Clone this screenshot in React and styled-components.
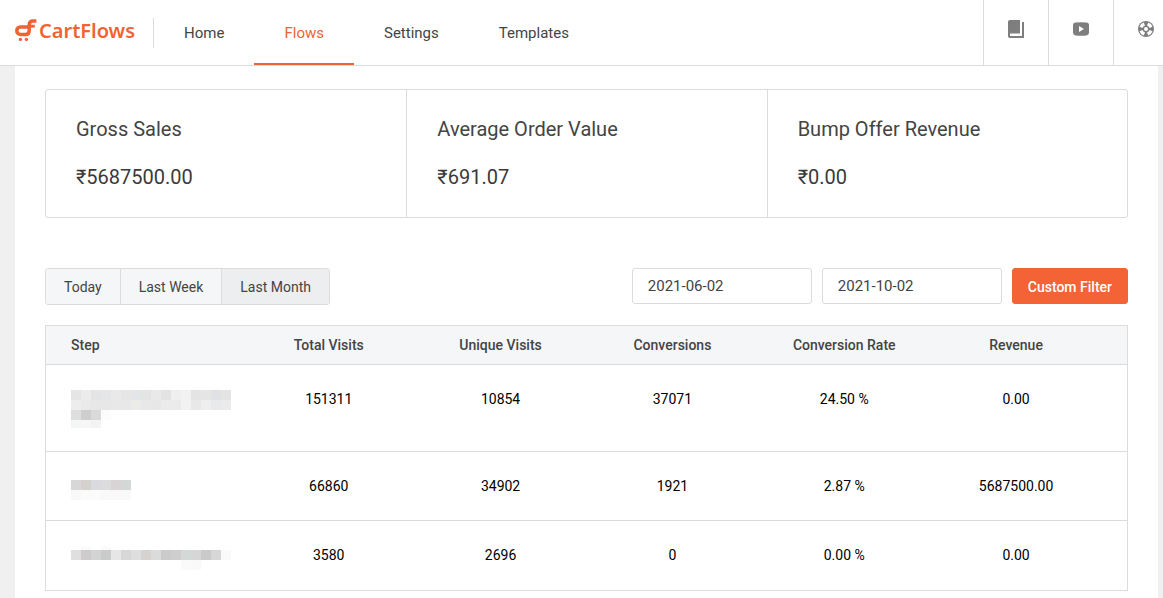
import React, { useState } from 'react'
import styled, { createGlobalStyle } from 'styled-components'

const GlobalStyle = createGlobalStyle`
    * {
        box-sizing: border-box;
    }
    body {
        margin: 0;
        background-color: #f0f0f0;
        color: #444;
        font-family: Roboto, "Liberation Sans", sans-serif;
        font-size: 14px;
        line-height: 18px;
    }
    button, input {
        font: inherit;
        color: inherit;
    }
`

const Header = styled.header`
    display: flex;
    height: 66px;
    padding-left: 15px;
    background-color: #fff;
    border-bottom: 1px solid #dcdcdc;
    overflow: hidden;
`
const Brand = styled.a`
    display: flex;
    align-items: flex-start;
    align-self: center;
    gap: 2px;
    height: 30px;
    padding-right: 18px;
    border-right: 1px solid #dcdcdc;
    color: #f06335;
    font-family: "Noto Sans", sans-serif;
    font-size: 20px;
    font-weight: 600;
    line-height: 26px;
    text-decoration: none;
`
const Nav = styled.nav`
    display: flex;
    flex: 1;
`
const NavLink = styled.a`
    display: flex;
    align-items: center;
    padding: 2px 30px 0;
    border-bottom: 2px solid ${props => props.$active ? '#f06335' : 'transparent'};
    color: ${props => props.$active ? '#f06335' : '#444'};
    font-size: 15px;
    text-decoration: none;
`
const Tools = styled.div`
    display: flex;
    margin-right: -15px;
`
const Tool = styled.a`
    display: flex;
    justify-content: center;
    width: 65px;
    padding-top: 19px;
    border-left: 1px solid #dcdcdc;
    color: #7e7e7e;
`

const Panel = styled.main`
    margin: 0 5px 0 15px;
    padding: 23px 30px 30px;
    background-color: #fff;
`
const Stats = styled.section`
    display: grid;
    grid-template-columns: repeat(3, 1fr);
    margin-bottom: 50px;
    border: 1px solid #dcdcdc;
    border-radius: 3px;
`
const Stat = styled.div`
    padding: 27px 30px 28px;
    border-left: 1px solid #dcdcdc;
    font-size: 20px;
    line-height: 24px;
    &:first-child {
        border-left: 0;
    }
`
const StatTitle = styled.h2`
    margin: 0 0 24px;
    font-size: 20px;
    font-weight: 400;
`
const StatValue = styled.div`
    color: #3a3a3a;
`

const Filters = styled.div`
    display: flex;
    justify-content: space-between;
    align-items: flex-start;
    margin-bottom: 20px;
`
const RangeGroup = styled.div`
    display: flex;
    border: 1px solid #dcdcdc;
    border-radius: 3px;
    overflow: hidden;
`
const RangeButton = styled.button`
    height: 35px;
    padding: 0 18px;
    border: 0;
    border-right: 1px solid #dcdcdc;
    background-color: ${props => props.$active ? '#edeef0' : '#f4f6f8'};
    cursor: pointer;
    &:last-child {
        border-right: 0;
    }
`
const CustomRange = styled.form`
    display: flex;
    gap: 10px;
`
const DateInput = styled.input`
    width: 180px;
    height: 36px;
    padding: 0 15px;
    border: 1px solid #dcdcdc;
    border-radius: 3px;
    background-color: #fff;
    font-size: 15px;
`
const FilterButton = styled.button`
    height: 36px;
    padding: 1px 15px 0;
    border: 1px solid #f06335;
    border-radius: 3px;
    background-color: #f36335;
    color: #fff;
    font-weight: 500;
    cursor: pointer;
`

const Table = styled.table`
    display: block;
    border: 1px solid #dcdcdc;
    thead, tbody {
        display: block;
    }
`
const Row = styled.tr`
    display: grid;
    grid-template-columns: repeat(6, 1fr);
    padding: 0 25px;
    border-bottom: 1px solid #dcdcdc;
    tbody &:last-child {
        border-bottom: 0;
    }
`
const HeadRow = styled(Row)`
    background-color: #f4f6f8;
`
const HeadCell = styled.th`
    padding: 10px 0;
    font-weight: 500;
    text-align: ${props => props.$left ? 'left' : 'center'};
`
const Cell = styled.td`
    padding: 25px 0;
    color: #000;
    text-align: center;
`
const StepCell = styled.td`
    padding: 25px 0 20px;
`
const MaskLine = styled.div`
    display: flex;
    height: ${props => props.$height}px;
`
const MaskBlock = styled.span`
    width: 10px;
    background-color: ${props => props.$color};
`

const navItems = ['Home', 'Flows', 'Settings', 'Templates']
const ranges = ['Today', 'Last Week', 'Last Month']
const columns = ['Step', 'Total Visits', 'Unique Visits', 'Conversions', 'Conversion Rate', 'Revenue']

const stats = [
    { title: 'Gross Sales', value: '₹5687500.00' },
    { title: 'Average Order Value', value: '₹691.07' },
    { title: 'Bump Offer Revenue', value: '₹0.00' },
]

// step names are masked, every line is a strip of 10px blocks
const steps = [
    {
        mask: [
            [10, '#e4e5e7 #ececec #e2e4e6 #e5e6e7 #e9e9e7 #e6e6e6 #e3e6e8 #e3e4e4 #e9e9e7 #e1e3e5 #efefef #f2f2f0 #e2e4e5 #e5e5e5 #dfe1e4 #e4e4e4'],
            [10, '#ededed #e9e9e9 #e7e7e7 #e7e7e6 #e8e8e6 #e8e8e8 #ebebe8 #e8e8e8 #e6e7e6 #ebebeb #ebebeb #f2f2f2 #e8e8e8 #eeeeee #e8e9ea #ebebeb'],
            [10, '#dedede #cecece #dadada #fcfcfc'],
            [8, '#f4f5f5 #f7f7f7 #f3f3f3'],
            [3, ''],
        ],
        values: ['151311', '10854', '37071', '24.50 %', '0.00'],
    },
    {
        mask: [
            [3, ''],
            [10, '#d7d7d7 #d5d1ce #dadbe0 #dcdcdc #d8d3d4 #d3d7d7'],
            [10, '#f8f8f8 #fbfbfb #fbfbfb #f9f9f9 #f9f9f9 #f9f9f9'],
        ],
        values: ['66860', '34902', '1921', '2.87 %', '5687500.00'],
    },
    {
        mask: [
            [4, '#fff #fbfbfb #fff #fbfbfb'],
            [10, '#dfdfdf #cdcbcb #d2d4d4 #c9cbca #e7e5e6 #d7d7d7 #dedede #d6d2cf #dadcdb #cdcacb #cecece #d3d8d9 #d5d6d6 #cbcaca #d7d7d7 #fafafa'],
            [10, '#fff #fff #fff #fff #fff #fff #fff #fff #fff #fff #fff #fafafa #f9f9f9'],
        ],
        values: ['3580', '2696', '0', '0.00 %', '0.00'],
    },
]

function LogoMark() {
    return (
        <svg width="22" height="24" viewBox="0 0 22 24" fill="none" aria-hidden="true">
            <path
                d="M14 8.9H5.6C3.2 8.9 1.8 10.6 1.8 12.7S3.2 16.6 5.6 16.6H10.4C12.8 16.6 14.2 15.2 14.2 12.8V7C14.2 4.6 15.6 3.1 18 3.1H21.4"
                stroke="currentColor"
                strokeWidth="3.5"
            />
            <path d="M14 8.2H19.8" stroke="currentColor" strokeWidth="2.8" />
            <circle cx="5.4" cy="21.4" r="1.7" fill="currentColor" />
            <circle cx="11.4" cy="21.4" r="1.7" fill="currentColor" />
        </svg>
    )
}

function BookIcon() {
    return (
        <svg width="16" height="20" viewBox="0 0 16 20" fill="currentColor" aria-hidden="true">
            <path d="M2 1H12V14.5H2V17H14V3H16V19H2C.8 19 0 18.2 0 17V3C0 1.8.8 1 2 1Z" />
        </svg>
    )
}

function VideoIcon() {
    return (
        <svg width="16" height="20" viewBox="0 0 16 20" fill="currentColor" aria-hidden="true">
            <path fillRule="evenodd" d="M2.6 3.6Q8 3.1 13.4 3.6Q16 3.7 16 6.2V13.8Q16 16.2 13.4 16.4Q8 16.9 2.6 16.4Q0 16.2 0 13.8V6.2Q0 3.7 2.6 3.6ZM6 7V13L11 10Z" />
        </svg>
    )
}

function SupportIcon() {
    return (
        <svg width="16" height="20" viewBox="0 0 16 20" fill="none" aria-hidden="true">
            <circle cx="8" cy="10" r="8" fill="currentColor" />
            <g fill="#fff">
                <circle cx="8" cy="10" r="2" />
                {[45, 135, 225, 315].map(angle => (
                    <path key={angle} d="M6.2 6.8L5.1 3.8Q8 2.1 10.9 3.8L9.8 6.8Q8 5.9 6.2 6.8Z" transform={`rotate(${angle} 8 10)`} />
                ))}
            </g>
        </svg>
    )
}

function StepRow(props) {
    return (
        <Row>
            <StepCell>
                {props.mask.map(([height, colors], i) => (
                    <MaskLine key={i} $height={height}>
                        {colors.split(' ').filter(Boolean).map((color, j) => <MaskBlock key={j} $color={color} />)}
                    </MaskLine>
                ))}
            </StepCell>
            {props.values.map((value, i) => <Cell key={i}>{value}</Cell>)}
        </Row>
    )
}

function App() {
    const [range, setRange] = useState('Last Month')
    const [from, setFrom] = useState('2021-06-02')
    const [to, setTo] = useState('2021-10-02')

    return (
        <>
            <GlobalStyle />
            <Header>
                <Brand href="#">
                    <LogoMark />
                    CartFlows
                </Brand>
                <Nav>
                    {navItems.map(item => (
                        <NavLink key={item} href="#" $active={item === 'Flows'}>{item}</NavLink>
                    ))}
                </Nav>
                <Tools>
                    <Tool href="#" aria-label="Documentation"><BookIcon /></Tool>
                    <Tool href="#" aria-label="Videos"><VideoIcon /></Tool>
                    <Tool href="#" aria-label="Support"><SupportIcon /></Tool>
                </Tools>
            </Header>
            <Panel>
                <Stats>
                    {stats.map(stat => (
                        <Stat key={stat.title}>
                            <StatTitle>{stat.title}</StatTitle>
                            <StatValue>{stat.value}</StatValue>
                        </Stat>
                    ))}
                </Stats>
                <Filters>
                    <RangeGroup>
                        {ranges.map(item => (
                            <RangeButton key={item} type="button" $active={item === range} onClick={() => setRange(item)}>
                                {item}
                            </RangeButton>
                        ))}
                    </RangeGroup>
                    <CustomRange onSubmit={e => e.preventDefault()}>
                        <DateInput aria-label="From" value={from} onChange={e => setFrom(e.target.value)} />
                        <DateInput aria-label="To" value={to} onChange={e => setTo(e.target.value)} />
                        <FilterButton type="submit">Custom Filter</FilterButton>
                    </CustomRange>
                </Filters>
                <Table>
                    <thead>
                        <HeadRow>
                            {columns.map((column, i) => <HeadCell key={column} $left={i === 0}>{column}</HeadCell>)}
                        </HeadRow>
                    </thead>
                    <tbody>
                        {steps.map((step, i) => <StepRow key={i} {...step} />)}
                    </tbody>
                </Table>
            </Panel>
        </>
    )
}

export default App
